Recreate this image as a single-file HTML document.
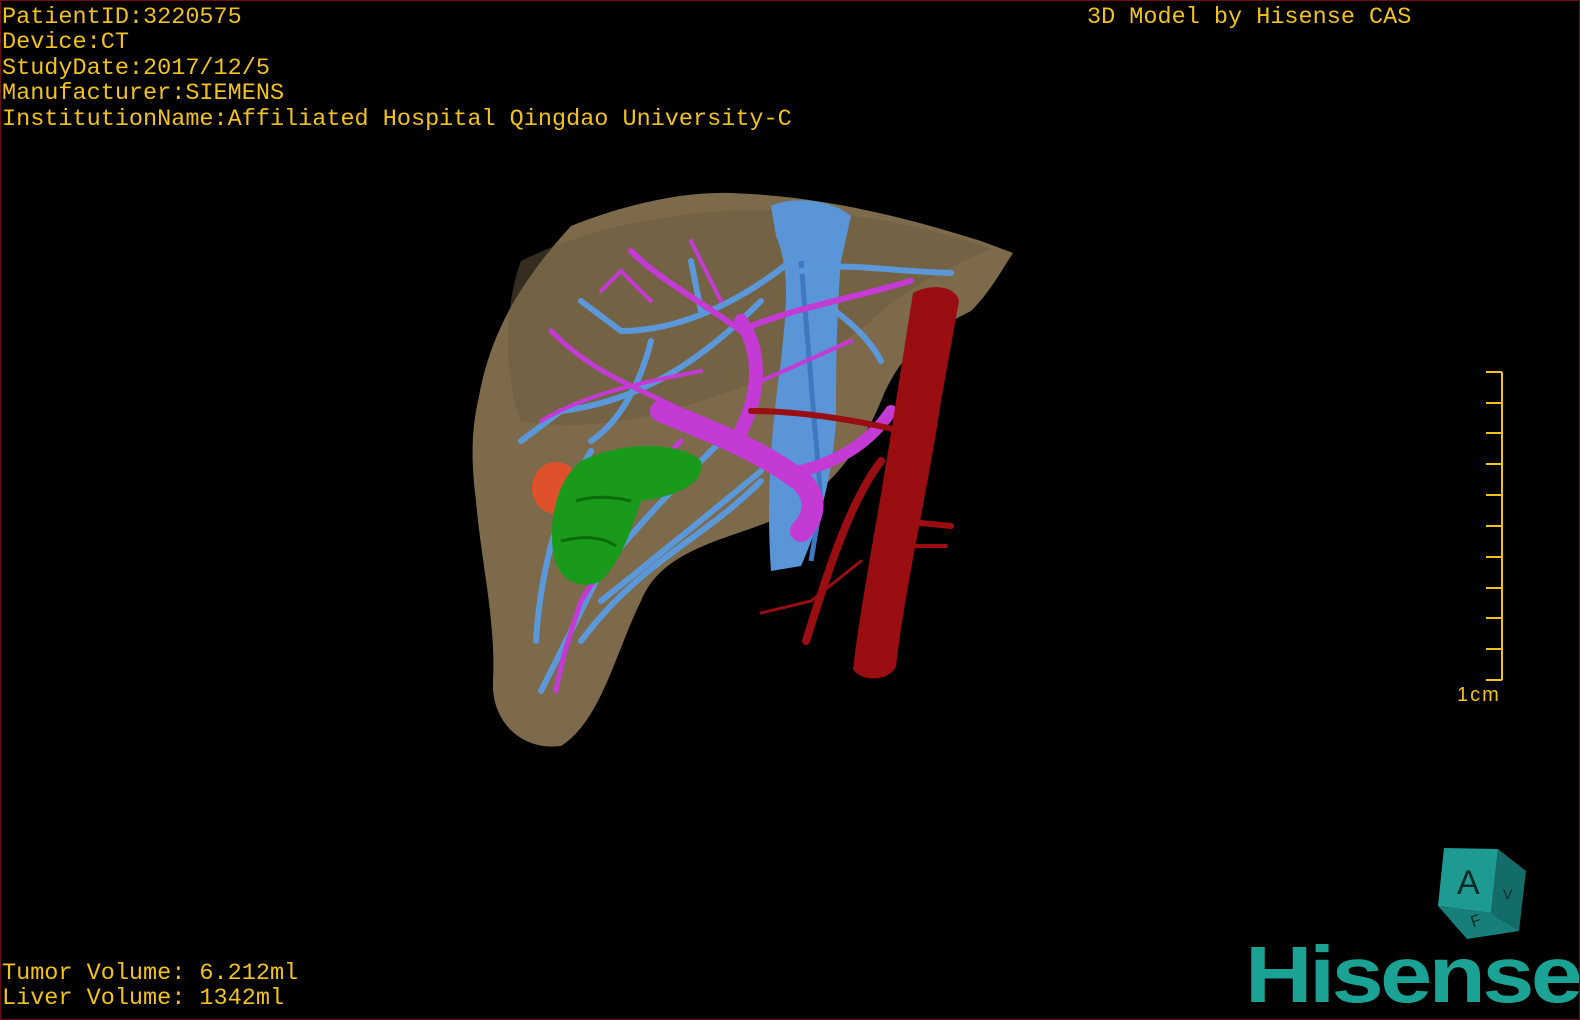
<!DOCTYPE html>
<html><head><style>
html,body{margin:0;padding:0;background:#000;}
#c{position:relative;width:1580px;height:1020px;background:#000;overflow:hidden;box-sizing:border-box;border:1px solid #6b0f12;}
.t{position:absolute;color:#f2c21a;font-family:"Liberation Mono",monospace;font-size:23.5px;line-height:25.4px;white-space:pre;letter-spacing:0;}
.logo{position:absolute;left:1244px;top:934px;font-family:"Liberation Sans",sans-serif;font-weight:bold;font-size:80px;color:#1aa394;letter-spacing:-3px;line-height:80px;transform:scaleX(1.17);transform-origin:left top;}
</style></head><body><div id="c">
<div class="t" style="left:1px;top:4px">PatientID:3220575
Device:CT
StudyDate:2017/12/5
Manufacturer:SIEMENS
InstitutionName:Affiliated Hospital Qingdao University-C</div>
<div class="t" style="left:1086px;top:4px">3D Model by Hisense CAS</div>
<div class="t" style="left:1px;top:960px">Tumor Volume: 6.212ml
Liver Volume: 1342ml</div>

<svg width="1580" height="1020" style="position:absolute;left:0;top:0">
<path d="M478,395 C490,330 520,280 570,225 C620,205 680,190 730,192 C820,195 900,215 980,240 L1012,252 C1000,270 990,290 970,310 C930,330 900,350 880,400 C860,450 820,500 770,520 C720,540 660,550 640,600 C615,650 600,720 560,745 C520,750 490,720 492,680 C495,620 480,560 475,500 C470,460 470,430 478,395 Z" fill="#7d6a4b"/>
<path d="M520,260 C600,220 700,205 800,210 C880,215 940,230 990,248 C940,270 900,290 870,320 C820,360 760,380 700,400 C640,420 580,430 520,420 C500,370 505,300 520,260Z" fill="#6c593f" opacity=".5"/>
<path d="M770,205 C790,195 830,198 850,215 L840,260 C835,320 835,380 835,420 C832,470 820,520 800,565 L770,570 C765,500 770,430 780,360 C785,310 790,270 775,235 Z" fill="#5a95d8"/>
<path d="M800,260 L820,500 L810,560" stroke="#3d78c0" stroke-width="5" fill="none"/>
<g stroke="#5b98d9" stroke-width="6" fill="none" stroke-linecap="round">
<path d="M790,260 C740,300 680,330 620,330 L580,300"/>
<path d="M760,300 C700,360 640,400 560,410 L520,440"/>
<path d="M800,270 C840,260 880,270 950,272"/>
<path d="M820,300 C850,320 870,340 880,360"/>
<path d="M720,440 C680,480 640,520 600,570 C580,610 560,650 540,690"/>
<path d="M760,470 C700,520 650,560 600,600"/>
<path d="M650,340 C640,380 620,420 590,440"/>
<path d="M700,310 L690,260"/>
<path d="M590,450 C560,500 540,560 535,640"/>
<path d="M760,480 C700,540 640,560 580,640"/>
</g>
<g stroke="#c43ad4" fill="none" stroke-linecap="round">
<path d="M660,410 C710,430 760,450 800,480 C820,500 810,520 800,530" stroke-width="22"/>
<path d="M740,430 C760,390 760,350 740,320" stroke-width="14"/>
<path d="M800,470 C840,460 870,440 890,410" stroke-width="12"/>
<path d="M740,330 C700,300 660,280 630,250" stroke-width="6"/>
<path d="M740,330 C780,310 840,300 910,280" stroke-width="6"/>
<path d="M700,420 C650,390 600,380 550,330" stroke-width="5"/>
<path d="M680,440 C640,480 620,540 580,600 C570,630 560,660 555,690" stroke-width="5"/>
<path d="M650,300 L620,270 L600,290" stroke-width="4"/>
<path d="M700,370 C650,380 590,390 540,420" stroke-width="4"/>
<path d="M720,300 L690,240" stroke-width="4"/>
<path d="M760,380 L850,340" stroke-width="4"/>
</g>
<path d="M912,292 C930,282 955,285 958,300 L940,400 C925,500 905,580 895,665 C890,680 860,682 852,668 C860,600 880,500 895,400 Z" fill="#9a0e12"/>
<g stroke="#9a0e12" fill="none" stroke-linecap="round">
<path d="M880,460 C850,500 830,560 805,640" stroke-width="8"/>
<path d="M900,520 L950,525" stroke-width="6"/>
<path d="M860,560 L810,600 L760,612" stroke-width="3"/>
<path d="M900,430 C860,420 800,410 750,410" stroke-width="6"/>
<path d="M890,545 L945,545" stroke-width="4"/>
</g>
<ellipse cx="555" cy="487" rx="24" ry="26" fill="#e0502a"/>
<path d="M580,460 C620,440 680,440 700,460 C705,480 680,495 640,500 C630,530 620,560 600,580 C580,590 555,580 552,550 C548,520 555,480 580,460 Z" fill="#1a9a1a"/>
<path d="M575,500 C590,495 610,495 630,500 M560,540 C580,535 600,535 615,545" stroke="#0d6a0d" stroke-width="3" fill="none"/>
<g stroke="#f2c21a" stroke-width="2">
<line x1="1501" y1="371" x2="1501" y2="679"/>
<line x1="1485" y1="371" x2="1501" y2="371"/><line x1="1485" y1="402" x2="1501" y2="402"/>
<line x1="1485" y1="432" x2="1501" y2="432"/><line x1="1485" y1="463" x2="1501" y2="463"/>
<line x1="1485" y1="494" x2="1501" y2="494"/><line x1="1485" y1="525" x2="1501" y2="525"/>
<line x1="1485" y1="556" x2="1501" y2="556"/><line x1="1485" y1="587" x2="1501" y2="587"/>
<line x1="1485" y1="617" x2="1501" y2="617"/><line x1="1485" y1="648" x2="1501" y2="648"/>
<line x1="1485" y1="679" x2="1501" y2="679"/>
</g>
<text x="1456" y="700" fill="#f2c21a" font-family="Liberation Sans,sans-serif" font-size="20" letter-spacing="2">1cm</text>
<polygon points="1443,847 1497,848 1490,912 1437,905" fill="#1e9a93"/>
<polygon points="1497,848 1525,870 1518,930 1490,912" fill="#136c67"/>
<polygon points="1437,905 1490,912 1518,930 1466,938" fill="#177f79"/>
<text x="1456" y="893" font-family="Liberation Sans,sans-serif" font-size="34" fill="#0a2a28">A</text>
<text x="1502" y="898" font-family="Liberation Sans,sans-serif" font-size="14" fill="#0a2a28">V</text>
<text x="1470" y="925" font-family="Liberation Sans,sans-serif" font-size="16" fill="#0a2a28" transform="rotate(-20 1475 920)">F</text>
</svg>
<div class="logo">Hisense</div>
</div></body></html>
